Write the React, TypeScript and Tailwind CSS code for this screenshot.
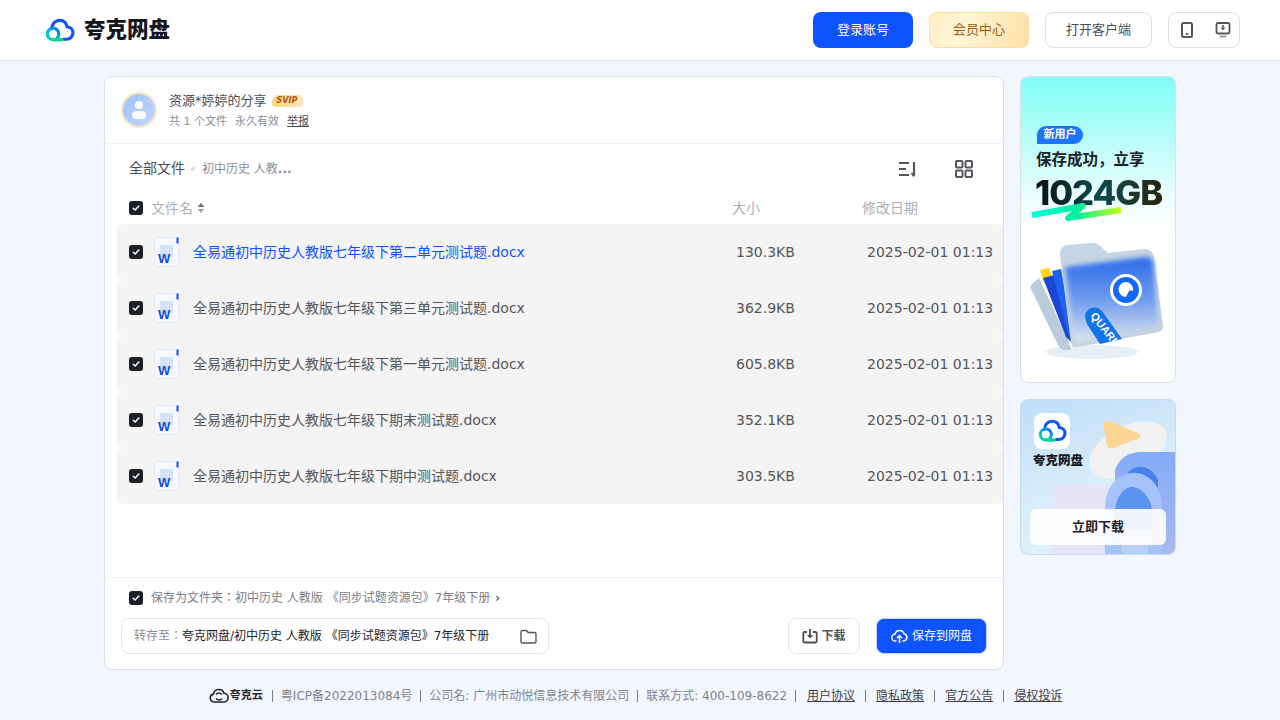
import { ReactNode } from 'react';

const files = [
  { name: '全易通初中历史人教版七年级下第二单元测试题.docx', size: '130.3KB', active: true },
  { name: '全易通初中历史人教版七年级下第三单元测试题.docx', size: '362.9KB' },
  { name: '全易通初中历史人教版七年级下第一单元测试题.docx', size: '605.8KB' },
  { name: '全易通初中历史人教版七年级下期末测试题.docx', size: '352.1KB' },
  { name: '全易通初中历史人教版七年级下期中测试题.docx', size: '303.5KB' },
];

function CloudLogo({ size = 32 }: { size?: number }) {
  return (
    <svg width={size} height={size * 0.8} viewBox="0 0 32 26" fill="none">
      <defs>
        <linearGradient id="lg" x1="0" y1="1" x2="1" y2="0">
          <stop offset="0" stopColor="#00e0a0" />
          <stop offset="0.5" stopColor="#00b0e0" />
          <stop offset="1" stopColor="#0d53ff" />
        </linearGradient>
      </defs>
      <path d="M7 11.5C7.600 6 11 2.500 15.500 2.500c4.200 0 7.400 2.800 8.200 7 3.600.3 6.300 3 6.300 6.600 0 3.800-3 6.900-6.900 6.900h-2.800" stroke="#0d53ff" strokeWidth="3.400" strokeLinecap="round" />
      <path d="M17.500 23.500H8.500a6.200 6.200 0 1 1 6.200-6.200c0 1.600-.5 3-1.600 4" stroke="url(#lg)" strokeWidth="3.400" strokeLinecap="round" />
      <path d="M8.500 23.500h9" stroke="#00d890" strokeWidth="3.400" strokeLinecap="round" />
    </svg>
  );
}

function Check() {
  return (
    <span className="flex h-[14px] w-[14px] shrink-0 items-center justify-center rounded-[3px] bg-[#1d1f27]">
      <svg width="8" height="8" viewBox="0 0 8 8" fill="none">
        <path d="M1.200 4.200 3.200 6 6.800 2" stroke="#fff" strokeWidth="1.500" strokeLinecap="round" strokeLinejoin="round" />
      </svg>
    </span>
  );
}

function WordIcon() {
  return (
    <svg width="28" height="32" viewBox="0 0 28 32" fill="none">
      <path d="M2.500 1.500h20.500l3 3v25a1 1 0 0 1-1 1H2.500a1 1 0 0 1-1-1v-27a1 1 0 0 1 1-1z" fill="#f6f9ff" stroke="#dce7fb" />
      <rect x="23.500" y="1.500" width="2" height="6" fill="#0d53ff" />
      <rect x="7" y="9" width="13" height="12" fill="#d5e1fa" />
      <text x="5" y="27" fontSize="13" fontWeight="700" fill="#0b4fdc" fontFamily="Liberation Sans, sans-serif">W</text>
    </svg>
  );
}

function Btn({ className, children }: { className: string; children: ReactNode }) {
  return <div className={`flex h-9 items-center justify-center rounded-lg ${className}`}>{children}</div>;
}

function Sep() {
  return <span className="mx-2 h-3 w-px bg-[#7a7d88]" />;
}

function NewUserAd() {
  return (
    <div className="relative h-[307px] overflow-hidden rounded-lg border border-[#dcdfe6] bg-[linear-gradient(180deg,#7efff8_0%,#c5fdfb_25%,#f2fefe_42%,#ffffff_50%)]">
      <div className="absolute left-[16px] top-[49px] flex h-[18px] w-[46px] items-center justify-center rounded-[9px] rounded-bl-none bg-[#1a74ff] text-[11px] font-bold text-white">新用户</div>
      <div className="absolute left-[15px] top-[70px] font-['Noto_Sans_CJK_SC',sans-serif] text-[15.500px] font-bold text-[#1a2228]">保存成功，立享</div>
      <div className="absolute left-[14px] top-[94px] bg-[linear-gradient(90deg,#0a0f10_0%,#0b4a52_50%,#1c3a30_75%,#2a2208_100%)] bg-clip-text font-['Inter',sans-serif] text-[34.500px] leading-[44px] font-extrabold tracking-[-1px] text-transparent">1024GB</div>
      <svg className="absolute left-[10px] top-[124px]" width="96" height="24" viewBox="0 0 96 24" fill="none">
        <defs>
          <linearGradient id="sw" x1="0" y1="0" x2="1" y2="0">
            <stop offset="0" stopColor="#00ffe0" />
            <stop offset="0.5" stopColor="#00f0a0" />
            <stop offset="1" stopColor="#c8ff10" />
          </linearGradient>
        </defs>
        <path d="M1 14 52 5 37 17 90 9" stroke="url(#sw)" strokeWidth="6" strokeLinejoin="round" />
      </svg>
      <svg className="absolute left-[8px] top-[160px]" width="136" height="128" viewBox="0 0 136 128" fill="none">
        <defs>
          <linearGradient id="fold" x1="0" y1="0" x2="0" y2="1">
            <stop offset="0" stopColor="#2a6bea" />
            <stop offset="0.5" stopColor="#6f9cee" />
            <stop offset="1" stopColor="#e2e8ef" />
          </linearGradient>
          <linearGradient id="glass" x1="0" y1="0" x2="0" y2="1">
            <stop offset="0" stopColor="#c6d6e4" />
            <stop offset="1" stopColor="#c4d2de" />
          </linearGradient>
          <filter id="soft"><feGaussianBlur stdDeviation="2.500" /></filter>
          <clipPath id="tag"><path d="M56 80C56 71 67 67 73 74L93 102 71 107 58 87Z" /></clipPath>
        </defs>
        <ellipse cx="63" cy="115" rx="46" ry="7" fill="#e6eff5" />
        <path d="M3 47 10 41 39 103 42 113 36 113C33 113 31 111 29 108L3 54C1 51 1 49 3 47Z" fill="#b9cbdc" />
        <path d="M11 33 20 31 25 44 15 46Z" fill="#ffd60a" />
        <path d="M14 41 26 38 43 106 37 100Z" fill="#1b47d8" />
        <path d="M23 34 32 32 46 104 40 100Z" fill="#1c62ec" />
        <path d="M31 18C31 12 33 9 38 8L63 6C67 6 69 7 71 9L79 16 115 12C120 12 124 15 125 20L134 89C134 92 133 94 130 95L48 110C45 111 43 109 42 106Z" fill="url(#glass)" />
        <path d="M36 30 117 20C121 20 123 22 124 25L129 88 46 106Z" fill="url(#fold)" filter="url(#soft)" />
        <circle cx="97" cy="53" r="14.500" fill="#1168fa" stroke="#fff" strokeWidth="3" />
        <path d="M97 45a7.500 7.500 0 0 1 7 9c-2-1.500-4-1-5 2l-2 4a7.500 7.500 0 0 1 0-15Z" fill="#fff" />
        <path d="M56 80C56 71 67 67 73 74L93 102 71 107 58 87Z" fill="#1075e8" />
        <g clipPath="url(#tag)">
          <text x="61" y="79" fontSize="11" fontWeight="700" fill="#fff" transform="rotate(52 61 79)" fontFamily="Liberation Sans, sans-serif">QUARK</text>
        </g>
      </svg>
    </div>
  );
}

function DownloadAd() {
  return (
    <div className="relative h-[156px] overflow-hidden rounded-lg border border-[#c9d9ec] bg-[linear-gradient(160deg,#bfdefa_0%,#d8ecfb_50%,#e0f5fc_100%)]">
      <svg className="absolute left-0 top-0" width="156" height="156" viewBox="0 0 156 156" fill="none">
        <defs>
          <linearGradient id="back" x1="0" y1="0" x2="0" y2="1">
            <stop offset="0" stopColor="#83abf8" />
            <stop offset="1" stopColor="#a8b9ee" />
          </linearGradient>
        </defs>
        <path d="M32 85H100V156H32Z" fill="#e8e4f7" />
        <ellipse cx="107" cy="50" rx="42" ry="24" fill="#f1f1f1" transform="rotate(-28 107 50)" />
        <path d="M82 25C82 21 85 20 88 21L117 33C120 35 120 38 117 39L92 48C88 49 87 48 86 45Z" fill="#fbd793" />
        <path d="M94 70C98 58 108 52 120 52H156V156H94Z" fill="url(#back)" />
        <path d="M103 82C106 64 128 60 137 80V95H103Z" fill="#4a80ec" />
        <path d="M84 108C84 86 98 73 113 73 128 73 141 86 141 108V156H84Z" fill="#a5c3f9" />
        <path d="M94 112C94 98 103 87 111 87 120 87 131 98 131 112V130H94Z" fill="#5b93f0" />
        <path d="M101 130H127V156H101Z" fill="#bccff8" />
      </svg>
      <div className="absolute left-[13px] top-[13px] flex h-9 w-9 items-center justify-center rounded-lg bg-white">
        <CloudLogo size={29} />
      </div>
      <div className="absolute left-[12px] top-[52px] text-[12.500px] font-black text-[#14161c]">夸克网盘</div>
      <div className="absolute left-[9px] top-[109px] flex h-9 w-[136px] items-center justify-center rounded-md bg-white/90 text-[13px] font-bold text-[#1f2329]">立即下载</div>
    </div>
  );
}

export default function App() {
  return (
    <div className="flex h-[720px] w-[1280px] flex-col overflow-hidden bg-[#f2f6ff] font-['DejaVu_Sans','Noto_Sans_CJK_JP',sans-serif]">
      <header className="flex h-[61px] shrink-0 items-center justify-between border-b border-[#dfe2ea] bg-white pl-[45px] pr-10">
        <div className="flex items-center gap-[9px]">
          <CloudLogo size={30} />
          <span className="text-[21.500px] font-black leading-none text-[#14161c]">夸克网盘</span>
        </div>
        <div className="flex items-center gap-4 text-[13px]">
          <Btn className="w-[100px] bg-[#0d53ff] text-white">登录账号</Btn>
          <Btn className="w-[100px] border border-[#fbdc9c] bg-[linear-gradient(110deg,#ffeec4_0%,#fff6d8_35%,#ffdfa6_100%)] text-[#a25a05]">会员中心</Btn>
          <Btn className="w-[107px] border border-[#dcdfe6] text-[#4b4e58]">打开客户端</Btn>
          <div className="flex h-9 w-[72px] items-center justify-between rounded-lg border border-[#dcdfe6] pl-[11px] pr-[8px]">
            <svg width="14" height="18" viewBox="0 0 14 18" fill="none">
              <rect x="2" y="2" width="10" height="14" rx="1.500" stroke="#55565c" strokeWidth="2" />
              <path d="M5.500 13h3" stroke="#55565c" strokeWidth="1.600" />
            </svg>
            <svg width="16" height="16" viewBox="0 0 16 16" fill="none">
              <rect x="1.500" y="1" width="13" height="10.500" rx="1.500" stroke="#55565c" strokeWidth="1.800" />
              <path d="M8 3v2.500" stroke="#55565c" strokeWidth="1.600" />
              <path d="M5.500 5.500h5L8 8.500Z" fill="#55565c" />
              <path d="M4.500 14.500h7" stroke="#8a8a8e" strokeWidth="1.500" />
            </svg>
          </div>
        </div>
      </header>

      <main className="flex gap-4 pl-[104px] pt-[15px]">
        <section className="flex h-[594px] w-[900px] flex-col rounded-lg border border-[#dcdfe6] bg-white">
          <div className="flex h-[67px] shrink-0 items-center gap-3 border-b border-[#f2f3f5] px-4">
            <div className="flex h-9 w-9 items-center justify-center rounded-full border-2 border-[#fde9c0] bg-[linear-gradient(135deg,#9dc0fb,#c4d8fd)]">
              <div className="flex flex-col items-center gap-[2px]">
                <span className="h-2 w-2 rounded-full bg-white" />
                <span className="h-2 w-[14px] rounded-full bg-white/90" />
              </div>
            </div>
            <div className="flex flex-col gap-[4px]">
              <div className="flex items-center gap-[5px] text-[13px] leading-[18px] text-[#4b4e58]">
                资源*婷婷的分享
                <span className="flex h-[12px] w-[31px] items-center justify-center rounded-[4px] rounded-tl-[8px] bg-[linear-gradient(90deg,#fbd27a,#fde7b8)] text-[8px] font-bold italic text-[#b5530d]">SVIP</span>
              </div>
              <div className="flex items-center text-[11px] leading-[15px] text-[#8c8f99]">
                <span>共 1 个文件</span>
                <span className="ml-2">永久有效</span>
                <span className="ml-2 text-[#4a4d59] underline">举报</span>
              </div>
            </div>
          </div>

          <div className="flex h-[49px] shrink-0 items-center pl-6 pr-[30px]">
            <span className="text-[14px] text-[#4b4e58]">全部文件</span>
            <span className="ml-[6px] mr-[7px] h-1 w-1 rounded-full bg-[#dcdee3]" />
            <span className="text-[12px] text-[#8c8f99]">初中历史 人教<span className="font-bold">...</span></span>
            <div className="ml-auto flex items-center gap-[37px]">
              <svg width="20" height="18" viewBox="0 0 20 18" fill="none">
                <path d="M1 3h10M1 9h7M1 15h10" stroke="#55565c" strokeWidth="2" />
                <path d="M16 2v14" stroke="#55565c" strokeWidth="2.200" />
                <path d="M13.500 13 16 16.500" stroke="#55565c" strokeWidth="1.800" />
              </svg>
              <svg width="18" height="18" viewBox="0 0 18 18" fill="none">
                <rect x="1" y="1" width="6.500" height="6.500" rx="1" stroke="#55565c" strokeWidth="2" />
                <rect x="10.500" y="1" width="6.500" height="6.500" rx="1" stroke="#55565c" strokeWidth="2" />
                <rect x="1" y="10.500" width="6.500" height="6.500" rx="1" stroke="#55565c" strokeWidth="2" />
                <rect x="10.500" y="10.500" width="6.500" height="6.500" rx="1" stroke="#55565c" strokeWidth="2" />
              </svg>
            </div>
          </div>

          <div className="flex h-[31px] shrink-0 items-center pb-[1px] pl-6 text-[14px] text-[#aeb0b6]">
            <Check />
            <span className="ml-2">文件名</span>
            <svg className="ml-1" width="8" height="12" viewBox="0 0 8 12">
              <path d="M4 1 7.500 5H.5Z" fill="#6f7178" />
              <path d="M4 11 .5 7h7Z" fill="#a5a7ad" />
            </svg>
            <span className="ml-[527px] w-[130px]">大小</span>
            <span>修改日期</span>
          </div>

          <div className="ml-3 flex flex-col">
            {files.map((f) => (
              <div key={f.name} className="flex h-[56px] items-center rounded-md bg-[#f4f4f5] pl-3 text-[14px] text-[#55565c]">
                <Check />
                <span className="ml-[10px]"><WordIcon /></span>
                <span className={`ml-3 w-[543px] ${f.active ? 'text-[#0d53ff]' : ''}`}>{f.name}</span>
                <span className="w-[131px]">{f.size}</span>
                <span>2025-02-01 01:13</span>
              </div>
            ))}
          </div>

          <div className="mt-auto h-[92px] shrink-0 border-t border-[#f2f3f5] px-4">
            <div className="flex h-[40px] items-center pb-[1px] pl-2 text-[12px] text-[#7b7e88]">
              <Check />
              <span className="ml-2">保存为文件夹：初中历史 人教版 《同步试题资源包》7年级下册</span>
              <span className="ml-[5px] text-[#31343f]">›</span>
            </div>
            <div className="flex items-center">
              <div className="flex h-9 w-[428px] items-center justify-between rounded-lg border border-[#e3e5ea] pl-3 pr-[11px] text-[12px] text-[#1f2329]">
                <span><span className="text-[#8c8f99]">转存至：</span>夸克网盘/初中历史 人教版 《同步试题资源包》7年级下册</span>
                <svg width="17" height="15" viewBox="0 0 17 15" fill="none">
                  <path d="M1 3a1.500 1.500 0 0 1 1.500-1.500h4l1.500 2h6.500A1.500 1.500 0 0 1 16 5v7.500a1.500 1.500 0 0 1-1.500 1.500h-12A1.500 1.500 0 0 1 1 12.500Z" stroke="#55565c" strokeWidth="1.400" />
                </svg>
              </div>
              <Btn className="ml-auto w-[72px] gap-[3px] border border-[#e3e5ea] text-[12px] font-bold text-[#55565c]">
                <svg width="16" height="16" viewBox="0 0 16 16" fill="none">
                  <path d="M5 4H2.500A1.200 1.200 0 0 0 1.300 5.200v8.100a1.200 1.200 0 0 0 1.200 1.200h11a1.200 1.200 0 0 0 1.200-1.200V5.200A1.200 1.200 0 0 0 13.500 4H11" stroke="#4e4e52" strokeWidth="1.800" />
                  <path d="M8 1v6" stroke="#4e4e52" strokeWidth="1.800" />
                  <path d="M5 7h6l-3 3.500Z" fill="#4e4e52" />
                </svg>
                下载
              </Btn>
              <Btn className="ml-4 w-[111px] gap-[4px] border border-[#c5d3f5] bg-[#0d53ff] text-[12px] text-white">
                <svg width="17" height="16" viewBox="0 0 17 16" fill="none">
                  <path d="M5 13H4.500a3.500 3.500 0 0 1-.4-7A4.600 4.600 0 0 1 13 5.700 3.700 3.700 0 0 1 12.500 13H12" stroke="#fff" strokeWidth="1.500" strokeLinecap="round" />
                  <path d="M8.500 15V8M6 10l2.500-2.500L11 10" stroke="#fff" strokeWidth="1.500" />
                </svg>
                保存到网盘
              </Btn>
            </div>
          </div>
        </section>

        <aside className="flex w-[156px] flex-col gap-4">
          <NewUserAd />
          <DownloadAd />
        </aside>
      </main>

      <footer className="mt-[17px] flex items-center justify-center pr-[9px] text-[12px] text-[#81848f]">
        <span className="mr-[1px] flex items-center gap-[1px] text-[#23252d]">
          <svg width="20" height="16" viewBox="0 0 20 16" fill="none">
            <path d="M5 14a4 4 0 0 1-.6-7.900A5.500 5.500 0 0 1 15 5.200a4.400 4.400 0 0 1-.6 8.800ZM7 10.500c2 2 5 2 6 0M7 6.500c1.500-2 4-2 6 0" stroke="#23252d" strokeWidth="1.600" />
          </svg>
          <span className="text-[11px] font-bold">夸克云</span>
        </span>
        <Sep />
        <span>粤ICP备2022013084号</span>
        <Sep />
        <span>公司名: 广州市动悦信息技术有限公司</span>
        <Sep />
        <span>联系方式: 400-109-8622</span>
        <Sep />
        <span className="ml-[3px] text-[#3e414c] underline">用户协议</span>
        <span className="mx-[10px] h-3 w-px bg-[#7a7d88]" />
        <span className="text-[#3e414c] underline">隐私政策</span>
        <span className="mx-[10px] h-3 w-px bg-[#7a7d88]" />
        <span className="text-[#3e414c] underline">官方公告</span>
        <span className="mx-[10px] h-3 w-px bg-[#7a7d88]" />
        <span className="text-[#3e414c] underline">侵权投诉</span>
      </footer>
    </div>
  );
}
